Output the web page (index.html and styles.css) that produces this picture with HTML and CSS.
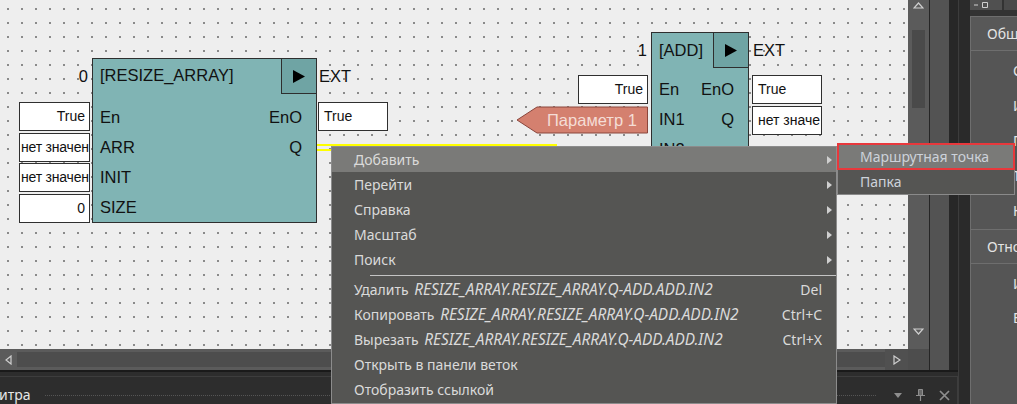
FILE: index.html
```html
<!DOCTYPE html>
<html lang="ru">
<head>
<meta charset="utf-8">
<title>FBD editor</title>
<link rel="stylesheet" href="styles.css">
</head>
<body>
<div class="app">
  <div class="main">
    <div class="workspace">
      <div class="editor">
        <div class="canvas">
          <div class="node node-resize">
            <div class="ins">
              <div class="hdr">0</div>
              <div class="vals">
                <div class="val">True</div>
                <div class="val val-l">нет значен</div>
                <div class="val val-l">нет значен</div>
                <div class="val">0</div>
              </div>
            </div>
            <div class="block">
              <div class="bhead">
                <span class="btitle">[RESIZE_ARRAY]</span>
                <span class="run"><svg width="12" height="13" viewBox="0 0 12 13"><polygon points="0,0 12,6.5 0,13" fill="#000"/></svg></span>
              </div>
              <div class="ports">
                <div class="port"><span>En</span><span>EnO</span></div>
                <div class="port"><span>ARR</span><span>Q</span></div>
                <div class="port"><span>INIT</span></div>
                <div class="port"><span>SIZE</span></div>
              </div>
            </div>
            <div class="outs">
              <div class="hdr">EXT</div>
              <div class="vals">
                <div class="val">True</div>
              </div>
            </div>
          </div>

          <div class="node node-add">
            <div class="ins">
              <div class="hdr">1</div>
              <div class="vals">
                <div class="val">True</div>
              </div>
            </div>
            <div class="block">
              <div class="bhead">
                <span class="btitle">[ADD]</span>
                <span class="run"><svg width="12" height="13" viewBox="0 0 12 13"><polygon points="0,0 12,6.5 0,13" fill="#000"/></svg></span>
              </div>
              <div class="ports">
                <div class="port"><span>En</span><span>EnO</span></div>
                <div class="port"><span>IN1</span><span>Q</span></div>
                <div class="port"><span>IN2</span></div>
              </div>
            </div>
            <div class="outs">
              <div class="hdr">EXT</div>
              <div class="vals">
                <div class="val">True</div>
                <div class="val">нет значе</div>
              </div>
            </div>
          </div>

          <div class="param">
            <svg class="param-bg" width="132" height="28" viewBox="0 0 132 28"><polygon points="1,14 21,1 131.5,1 131.5,27 21,27" fill="#d4806f" stroke="#8a463c" stroke-width="1"/></svg>
            <span class="param-text">Параметр 1</span>
          </div>

          <div class="wire"></div>
        </div>
        <div class="vscroll">
          <div class="vs-btn"><svg width="11" height="7" viewBox="0 0 11 7"><polygon points="5.5,1 10,6 1,6" fill="none" stroke="#cfcfcf" stroke-width="1.2"/></svg></div>
          <div class="vs-thumb"></div>
          <div class="vs-space"></div>
          <div class="vs-btn vs-down"><svg width="11" height="7" viewBox="0 0 11 7"><polygon points="1,1 10,1 5.5,6" fill="none" stroke="#cfcfcf" stroke-width="1.2"/></svg></div>
        </div>
        <div class="hscroll">
          <div class="hs-btn"><svg width="7" height="10" viewBox="0 0 7 10"><polygon points="6,1 6,9 1,5" fill="none" stroke="#cfcfcf" stroke-width="1.2"/></svg></div>
          <div class="hs-thumb"></div>
          <div class="hs-btn hs-right"><svg width="8" height="10" viewBox="0 0 8 10"><polygon points="1,1 1,9 7,5" fill="none" stroke="#cfcfcf" stroke-width="1.2"/></svg></div>
        </div>
        <div class="corner"></div>
      </div>
      <div class="strip"></div>
      <div class="gutter"></div>
    </div>
    <div class="bottom">
      <div class="bp">
        <span class="bp-title">итра</span>
        <span class="bp-dots"></span>
        <span class="bp-icons">
          <svg width="8" height="5" viewBox="0 0 8 5"><polygon points="0,0 8,0 4,5" fill="#8e8e8e"/></svg>
          <svg width="9" height="12" viewBox="0 0 9 12"><path d="M2.5 0.5h4v6h-4z" fill="#6a6a6a" stroke="#8e8e8e"/><path d="M0 6.5h9M4.5 6.5V12" stroke="#8e8e8e" stroke-width="1.2"/></svg>
          <svg width="11" height="11" viewBox="0 0 11 11"><path d="M1 1L10 10M10 1L1 10" stroke="#8e8e8e" stroke-width="1.7"/></svg>
        </span>
      </div>
    </div>
  </div>
  <div class="side">
    <div class="side-gutter"></div>
    <div class="props">
      <div class="ptabs">
        <div class="ptab"><svg width="20" height="8" viewBox="0 0 20 8"><path d="M2 4h4" stroke="#cfcfcf"/><path d="M10.5 1.5h5v5h-5z" fill="none" stroke="#cfcfcf"/></svg></div>
        <div class="ptab ptab2"></div>
      </div>
      <div class="pbody">
        <div class="psec">Общие</div>
        <div class="pitems">
          <div class="pitem">С</div>
          <div class="pitem">И</div>
          <div class="pitem">Г</div>
          <div class="pitem">Т</div>
          <div class="pitem">К</div>
        </div>
        <div class="psec psec2">Отношения</div>
        <div class="pitems pitems2">
          <div class="pitem pitem2">И</div>
          <div class="pitem pitem2">В</div>
        </div>
      </div>
    </div>
  </div>
</div>

<div class="menu">
  <div class="mi active"><span class="lbl">Добавить</span><span class="arr"></span></div>
  <div class="mi"><span class="lbl">Перейти</span><span class="arr"></span></div>
  <div class="mi"><span class="lbl">Справка</span><span class="arr"></span></div>
  <div class="mi"><span class="lbl">Масштаб</span><span class="arr"></span></div>
  <div class="mi"><span class="lbl">Поиск</span><span class="arr"></span></div>
  <div class="sep"></div>
  <div class="mi"><span class="lbl">Удалить <i>RESIZE_ARRAY.RESIZE_ARRAY.Q-ADD.ADD.IN2</i></span><span class="key">Del</span></div>
  <div class="mi"><span class="lbl">Копировать <i>RESIZE_ARRAY.RESIZE_ARRAY.Q-ADD.ADD.IN2</i></span><span class="key">Ctrl+C</span></div>
  <div class="mi"><span class="lbl">Вырезать <i>RESIZE_ARRAY.RESIZE_ARRAY.Q-ADD.ADD.IN2</i></span><span class="key">Ctrl+X</span></div>
  <div class="mi"><span class="lbl">Открыть в панели веток</span></div>
  <div class="mi"><span class="lbl">Отобразить ссылкой</span></div>
</div>

<div class="submenu">
  <div class="smi active">Маршрутная точка</div>
  <div class="smi">Папка</div>
</div>
<div class="annot"></div>
</body>
</html>
```

FILE: styles.css
```css
* { box-sizing: border-box; }
html, body { margin: 0; padding: 0; }
body {
  width: 1017px;
  height: 404px;
  overflow: hidden;
  position: relative;
  background: #2b2b2b;
  font-family: "Noto Sans", "Open Sans", sans-serif;
}
.app { display: flex; height: 404px; }
.main { width: 958px; display: flex; flex-direction: column; }
.workspace { display: flex; height: 370px; }
.editor {
  width: 929px;
  display: grid;
  grid-template-columns: 908px 21px;
  grid-template-rows: 349px 21px;
}

/* canvas */
.canvas {
  position: relative;
  overflow: hidden;
  background-color: #8a8a8a;
  background-image:
    linear-gradient(to right, #eeeeee 0 12px, transparent 12px),
    linear-gradient(to bottom, #eeeeee 0 12px, transparent 12px);
  background-size: 14px 14px;
  background-position: -5px -4px;
  font-family: "Liberation Sans", Arial, sans-serif;
  color: #111;
}
.node { position: absolute; display: flex; }
.node-resize { left: 19px; top: 58px; }
.node-add { left: 578px; top: 32px; }

.hdr {
  height: 36px;
  display: flex;
  align-items: center;
  font-size: 16.5px;
  white-space: nowrap;
}
.ins { width: 73px; display: flex; flex-direction: column; align-items: flex-end; }
.ins .hdr { padding-right: 4px; }
.vals { display: flex; flex-direction: column; }
.node-resize .vals { padding-top: 8px; }
.node-add .vals { padding-top: 7px; }
.val {
  height: 29px;
  margin-bottom: 1.5px;
  background: #fff;
  border: 1px solid #2f2f2f;
  font-size: 14px;
  line-height: 27px;
  white-space: nowrap;
  overflow: hidden;
}
.ins .val { width: 71px; margin-right: 2px; text-align: right; padding: 0 4px 0 1px; }
.ins .val-l { text-align: left; padding: 0 0 0 1px; letter-spacing: -0.2px; }
.node-add .ins .val { width: 70px; margin-right: 3px; }
.outs .val { width: 70px; padding-left: 5px; }
.node-resize .outs { padding-left: 1px; }
.node-resize .outs .hdr { padding-left: 1px; }
.node-add .outs { padding-left: 3px; }
.node-add .outs .hdr { padding-left: 1px; }

.block {
  background: #80b4b4;
  border: 1px solid #2e2e2e;
  display: flex;
  flex-direction: column;
}
.node-resize .block { width: 225px; height: 165px; }
.node-add .block { width: 98px; height: 190px; }
.bhead { height: 35px; display: flex; justify-content: space-between; }
.btitle { padding-left: 7px; font-size: 16.5px; line-height: 33px; white-space: nowrap; }
.node-add .btitle { line-height: 35px; }
.run {
  width: 35px;
  height: 35px;
  background: #6fa4a4;
  border-left: 1px solid #2e2e2e;
  border-bottom: 1px solid #2e2e2e;
  display: flex;
  align-items: center;
  justify-content: center;
}
.ports { display: flex; flex-direction: column; }
.node-resize .ports { padding-top: 8px; }
.node-add .ports { padding-top: 6px; }
.port {
  height: 30px;
  display: flex;
  justify-content: space-between;
  align-items: center;
  padding: 0 14px 0 7px;
  font-size: 16.5px;
}

.param { position: absolute; left: 516px; top: 106px; width: 132px; height: 28px; }
.param-bg { position: absolute; left: 0; top: 0; }
.param-text {
  position: absolute;
  left: 31px;
  top: 0;
  line-height: 28px;
  font-size: 16.5px;
  color: #f4ddd6;
  white-space: nowrap;
}
.wire {
  position: absolute;
  left: 317px;
  top: 144px;
  width: 240px;
  height: 7px;
  border-top: 2px solid #ffff00;
  border-bottom: 2px solid #ffff00;
}

/* scrollbars */
.vscroll { background: #5b5b5b; display: flex; flex-direction: column; align-items: center; }
.vs-btn { height: 10px; display: flex; align-items: center; justify-content: center; }
.vs-thumb { width: 13px; height: 78px; margin-top: 20px; background: #4a4a4a; }
.vs-space { flex: 1; }
.vs-down { height: 23px; align-items: flex-start; padding-top: 2px; }
.hscroll { background: #5b5b5b; display: flex; align-items: center; }
.hs-btn { width: 17px; display: flex; justify-content: center; }
.hs-thumb { flex: 1; height: 15px; background: #4d4d4d; }
.hs-right { width: 23px; justify-content: flex-start; padding-left: 8px; background: #505050; height: 21px; align-items: center; }
.corner { background: #4d4d4d; }
.strip { width: 20px; background: #535353; border-left: 1px solid #252525; }
.gutter { width: 9px; background: #272727; }

/* bottom panel */
.bottom {
  height: 34px;
  background: #2d2d2d;
  border-top: 2px solid #1a1a1a;
  padding-top: 4px;
}
.bp {
  height: 28px;
  border-top: 1px solid #3d3d3d;
  border-right: 1px solid #3d3d3d;
  display: flex;
  align-items: center;
  padding-top: 9px;
}
.bp-title { font-size: 14px; color: #e6e6e6; margin-left: -1px; line-height: 18px; }
.bp-dots { flex: 1; border-top: 1px dotted #555; margin: 1px 18px 0 14px; }
.bp-icons { display: flex; align-items: center; gap: 14px; padding-right: 7px; }

/* right side */
.side { width: 59px; display: flex; }
.side-gutter { width: 12px; background: #2a2a2a; border-left: 1px solid #3c3c3c; }
.props { width: 47px; display: flex; flex-direction: column; background: #333; }
.ptabs { height: 10px; display: flex; }
.ptab { width: 32px; background: #505050; display: flex; align-items: center; padding-left: 2px; }
.ptab2 { width: auto; flex: 1; margin-left: 2px; background: #4a4a4a; }
.pbody {
  margin-top: 6px;
  flex: 1;
  background: #555;
  border-top: 1px solid #6e6e6e;
  border-left: 1px solid #6e6e6e;
  overflow: hidden;
  font-size: 14px;
  color: #e4e4e4;
  white-space: nowrap;
}
.psec {
  height: 34px;
  line-height: 33px;
  padding-left: 16px;
  border-bottom: 1px solid #6e6e6e;
  background: #585858;
}
.psec2 { margin-top: 1px; border-top: 1px solid #6e6e6e; height: 35px; }
.pitems { padding-top: 2px; }
.pitems2 { padding-top: 3px; }
.pitem { height: 35px; line-height: 35px; padding-left: 42px; }
.pitem2 { height: 34px; line-height: 34px; }

/* context menu */
.menu {
  position: absolute;
  left: 331px;
  top: 146px;
  width: 506px;
  height: 258px;
  background: #555553;
  border: 1px solid #8c8c8c;
  font-size: 14px;
  color: #dadada;
}
.mi {
  height: 25px;
  display: flex;
  align-items: center;
  padding: 0 14px 0 22px;
  white-space: nowrap;
}
.mi.active { background: #7a7a78; }
.lbl { flex: 1; }
.lbl i { margin-left: 2px; font-size: 15.4px; }
.arr {
  width: 0;
  height: 0;
  border-left: 5px solid #cfcfcf;
  border-top: 4px solid transparent;
  border-bottom: 4px solid transparent;
  margin-right: -10px;
}
.sep { height: 5px; padding-top: 3px; margin-left: 38px; }
.sep::before { content: ""; display: block; height: 1px; background: #c4c4c4; }

.submenu {
  position: absolute;
  left: 837px;
  top: 143px;
  width: 178px;
  height: 52px;
  background: #555553;
  border: 1px solid #8a8a8a;
  font-size: 14px;
  color: #cdd2da;
}
.smi { height: 25px; line-height: 25px; padding-left: 22px; white-space: nowrap; }
.smi.active { background: #7a7a78; }
.annot {
  position: absolute;
  left: 837px;
  top: 143px;
  width: 178px;
  height: 27px;
  border: 2px solid #e8383c;
}
```
